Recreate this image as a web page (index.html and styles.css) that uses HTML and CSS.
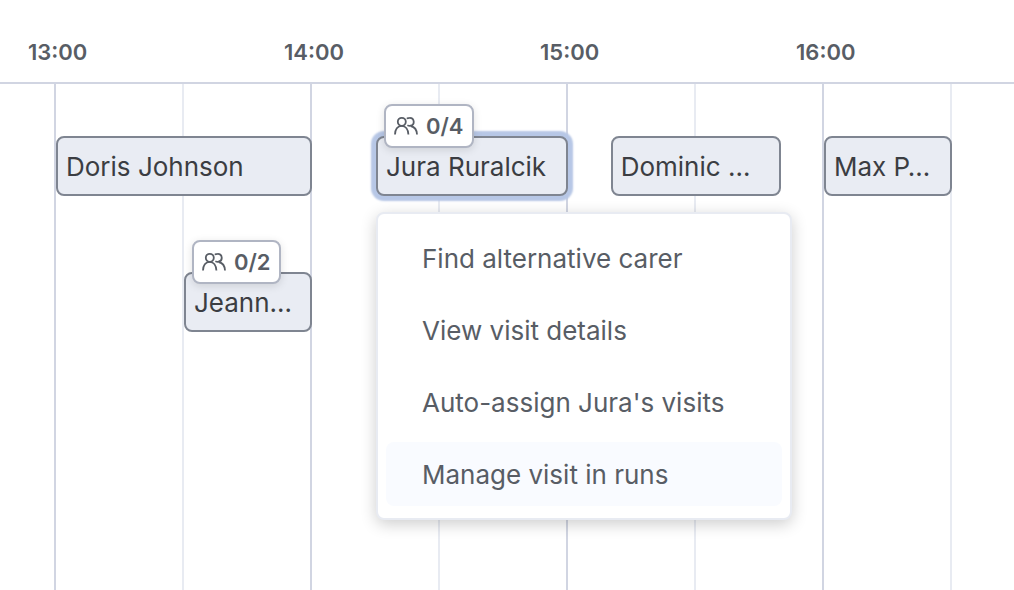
FILE: index.html
```html
<!DOCTYPE html>
<html lang="en">
<head>
    <meta charset="UTF-8">
    <meta name="viewport" content="width=device-width, initial-scale=1.0">
    <title>Visits</title>
    <link rel="stylesheet" href="styles.css">
</head>
<body>
    <svg class="sprite" aria-hidden="true">
        <symbol id="people" viewBox="0 0 24 20">
            <circle cx="7.8" cy="5.8" r="4"/>
            <path d="M1 18.500c0-5 2.600-8.700 6.600-8.700s6.600 3.700 6.800 8.700"/>
            <path d="M12.800 2.600c.8-.6 1.800-.8 2.800-.8a4 4 0 0 1 1 7.900c-1 .3-2 .1-3.200-.5"/>
            <path d="M16.800 10c3.600.8 6 4 6.200 8.500"/>
        </symbol>
    </svg>

    <main class="timeline">
        <header class="hours">
            <time>13:00</time>
            <time>14:00</time>
            <time>15:00</time>
            <time>16:00</time>
        </header>

        <div class="board">
            <!-- half hour lines -->
            <div class="lines">
                <div class="line gutter"></div>
                <div class="line half"></div>
                <div class="line"></div>
                <div class="line half"></div>
                <div class="line"></div>
                <div class="line half"></div>
                <div class="line"></div>
                <div class="line half"></div>
            </div>

            <div class="visit doris">
                <button type="button" class="visit-name">Doris Johnson</button>
            </div>

            <div class="visit jura">
                <button type="button" class="visit-name selected" aria-haspopup="menu" aria-expanded="true">Jura Ruralcik</button>
                <span class="badge"><svg class="icon" aria-hidden="true"><use href="#people"/></svg>0/4</span>
                <div class="menu" role="menu">
                    <button type="button" role="menuitem">Find alternative carer</button>
                    <button type="button" role="menuitem">View visit details</button>
                    <button type="button" role="menuitem">Auto-assign Jura's visits</button>
                    <button type="button" role="menuitem" class="active">Manage visit in runs</button>
                </div>
            </div>

            <div class="visit dominic">
                <button type="button" class="visit-name">Dominic …</button>
            </div>

            <div class="visit max">
                <button type="button" class="visit-name">Max P…</button>
            </div>

            <div class="visit jeann">
                <button type="button" class="visit-name">Jeann…</button>
                <span class="badge"><svg class="icon" aria-hidden="true"><use href="#people"/></svg>0/2</span>
            </div>
        </div>
    </main>
</body>
</html>
```
FILE: styles.css
```css
* {
    box-sizing: border-box;
}
body {
    margin: 0;
    background-color: #fff;
    color: #585d65;
    font-family: Inter, "Liberation Sans", sans-serif;
}
button {
    font-family: inherit;
    cursor: pointer;
}
.sprite {
    display: none;
}
.timeline {
    display: flex;
    flex-direction: column;
    min-height: 100vh;
    overflow: hidden;
}

/* one column is five minutes */
.hours {
    display: grid;
    grid-template-columns: repeat(45, minmax(0, 1fr));
    padding: 36px 26px 14px 28px;
    border-bottom: 2px solid #d1d5e2;
}
.hours time {
    grid-column: span 12;
    font-size: 22px;
    line-height: 32px;
    font-weight: 600;
    white-space: nowrap;
}
.hours time:last-child {
    grid-column: span 9;
}
.board {
    flex: 1;
    display: grid;
    grid-template-columns: 56px repeat(45, minmax(0, 1fr));
    grid-template-rows: 136px 136px 1fr;
    margin-right: -2px;
}
.lines {
    grid-row: 1 / 4;
    grid-column: 1 / -1;
    display: grid;
    grid-template-columns: subgrid;
}
.line {
    grid-column: span 6;
    border-right: 2px solid #d1d5e2;
}
.line.gutter {
    grid-column: span 1;
}
.line.half {
    border-color: #e8ebf2;
}

.visit {
    position: relative;
    grid-row: 1;
    margin-top: 52px;
}
.doris {
    grid-column: 2 / span 12;
}
.jura {
    grid-column: 17 / span 9;
    z-index: 1;
}
.dominic {
    grid-column: 28 / span 8;
}
.max {
    grid-column: 38 / span 6;
}
.jeann {
    grid-row: 2;
    grid-column: 8 / span 6;
}
.visit-name {
    display: block;
    width: 100%;
    height: 60px;
    padding: 0 8px;
    border: 2px solid #7f8591;
    border-radius: 8px;
    background-color: #e9ecf3;
    color: #3b3d42;
    font-size: 26px;
    text-align: left;
    white-space: nowrap;
    overflow: hidden;
}
.visit-name.selected {
    box-shadow: 0 0 2px 5px #b7c7e6;
}
.badge {
    position: absolute;
    top: -32px;
    left: 8px;
    display: flex;
    align-items: center;
    gap: 8px;
    height: 44px;
    padding: 0 8px;
    border: 2px solid #b0b5c3;
    border-radius: 8px;
    background-color: #fff;
    box-shadow: 0 2px 8px rgba(0, 0, 0, 0.12);
    font-size: 22px;
    font-weight: 600;
}
.icon {
    width: 24px;
    height: 20px;
    fill: none;
    stroke: #585d65;
    stroke-width: 1.8;
}

.menu {
    position: absolute;
    top: 76px;
    left: 0;
    display: flex;
    flex-direction: column;
    gap: 8px;
    min-width: 416px;
    padding: 12px 8px;
    border: 2px solid #e8ebf2;
    border-radius: 8px;
    background-color: #fff;
    box-shadow: 0 4px 16px rgba(0, 0, 0, 0.2);
}
.menu button {
    height: 64px;
    padding: 0 36px;
    border: none;
    border-radius: 8px;
    background-color: transparent;
    color: #585d65;
    font-size: 26px;
    text-align: left;
    white-space: nowrap;
}
.menu button:hover,
.menu .active {
    background-color: #f9fbff;
}
```
